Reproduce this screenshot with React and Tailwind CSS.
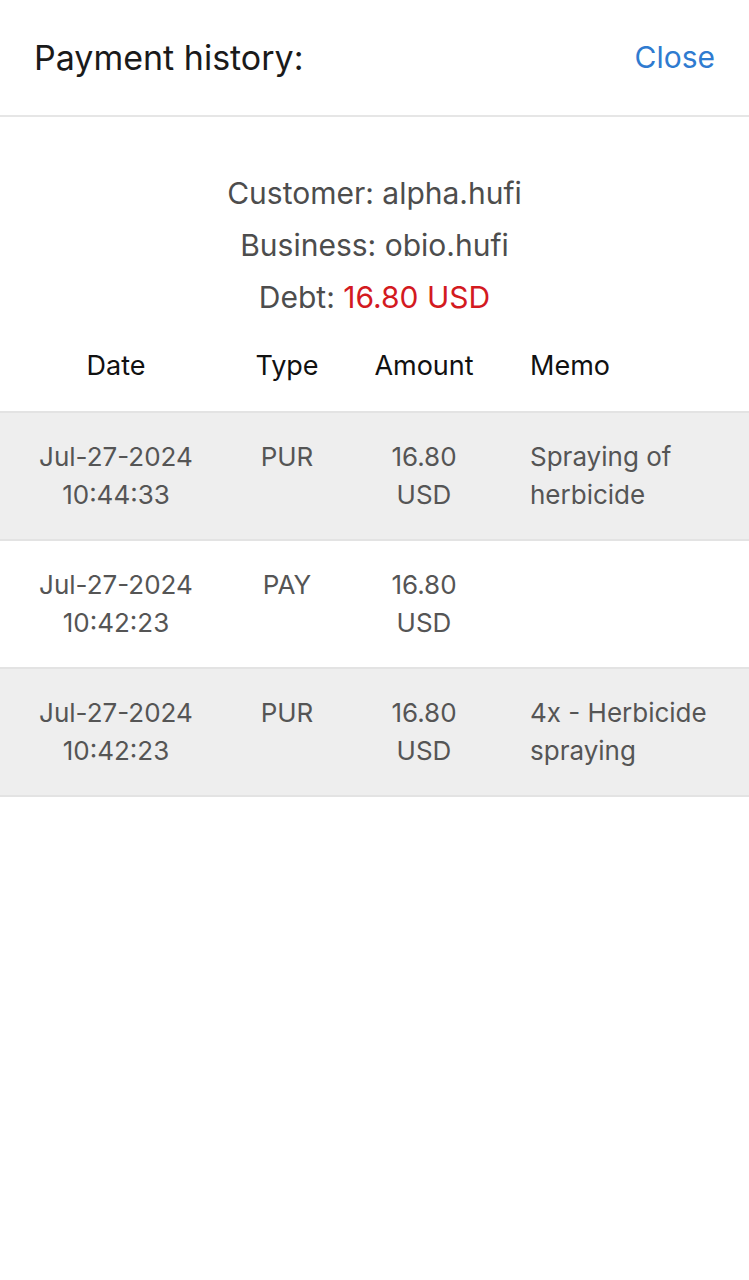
import React from 'react';

const rows = [
  { date: 'Jul-27-2024', time: '10:44:33', type: 'PUR', amount: '16.80', memo: 'Spraying of herbicide' },
  { date: 'Jul-27-2024', time: '10:42:23', type: 'PAY', amount: '16.80', memo: '' },
  { date: 'Jul-27-2024', time: '10:42:23', type: 'PUR', amount: '16.80', memo: '4x - Herbicide spraying' },
];

export default function App() {
  return (
    <div className="min-h-[1280px] w-full bg-white font-['Inter',sans-serif]">
      {/* Header */}
      <div className="flex h-[117px] items-center justify-between border-b-2 border-[#e6e6e6] px-[34px]">
        <h1 className="text-[34px] text-[#1a1a1a]">Payment history:</h1>
        <button className="text-[30px] text-[#2f7bd0]">Close</button>
      </div>

      {/* Summary */}
      <div className="flex flex-col items-center pt-[50px] text-[30px] leading-[52px] text-[#4d4d4d]">
        <p>Customer: alpha.hufi</p>
        <p>Business: obio.hufi</p>
        <p>
          Debt: <span className="text-[#d31a1f]">16.80 USD</span>
        </p>
      </div>

      {/* Table header */}
      <div className="grid h-[90px] grid-cols-[232px_110px_164px_1fr] items-center border-b-2 border-[#e3e3e3] pb-[2px] text-[27px] text-[#111]">
        <div className="text-center">Date</div>
        <div className="text-center">Type</div>
        <div className="text-center">Amount</div>
        <div className="pl-[24px]">Memo</div>
      </div>

      {/* Rows */}
      {rows.map((row, i) => (
        <div
          key={i}
          className={`grid grid-cols-[232px_110px_164px_1fr] border-b-2 border-[#e3e3e3] py-[25px] text-[26px] leading-[38px] text-[#555] ${
            i % 2 === 0 ? 'bg-[#eeeeee]' : 'bg-white'
          }`}
        >
          <div className="px-[24px] text-center">
            {row.date}
            <br />
            {row.time}
          </div>
          <div className="text-center">{row.type}</div>
          <div className="text-center">
            {row.amount}
            <br />
            USD
          </div>
          <div className="pl-[24px] pr-[24px]">{row.memo}</div>
        </div>
      ))}
    </div>
  );
}
